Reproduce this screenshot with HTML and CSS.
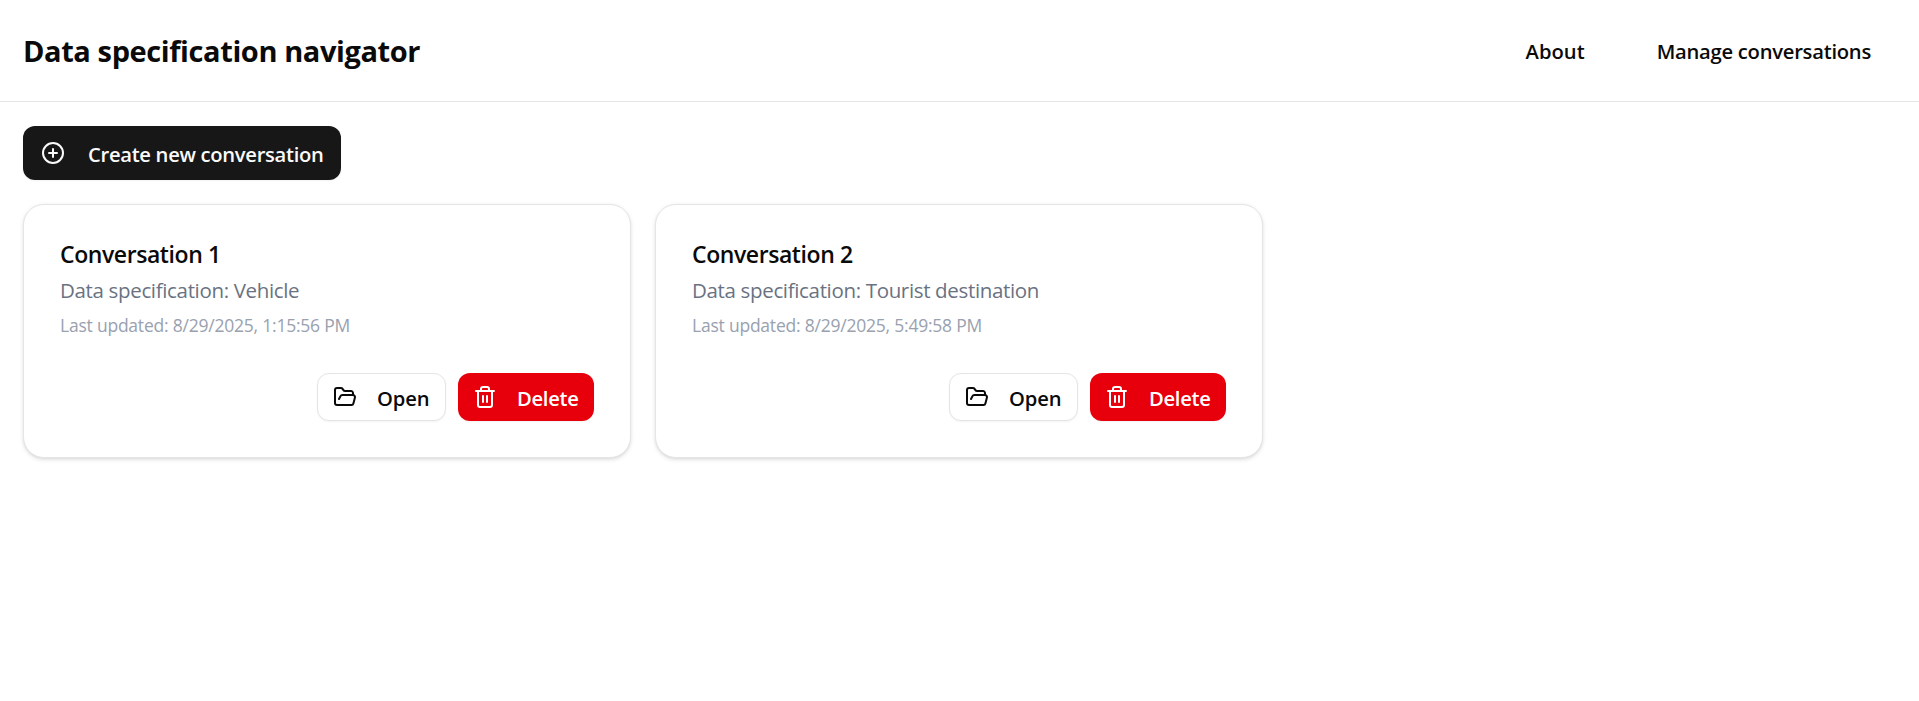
FILE: index.html
```
<!DOCTYPE html>
<html lang="en">
<head>
<meta charset="utf-8">
<title>Data specification navigator</title>
<link rel="stylesheet" href="styles.css">
</head>
<body>
<svg class="sprite" aria-hidden="true">
  <symbol id="circle-plus" viewBox="0 0 24 24"><circle cx="12" cy="12" r="10"/><path d="M8 12h8M12 8v8"/></symbol>
  <symbol id="folder-open" viewBox="0 0 24 24"><path d="m6 14 1.5-2.9A2 2 0 0 1 9.24 10H20a2 2 0 0 1 1.94 2.5l-1.54 6a2 2 0 0 1-1.95 1.5H4a2 2 0 0 1-2-2V5a2 2 0 0 1 2-2h3.9a2 2 0 0 1 1.69.9l.81 1.2a2 2 0 0 0 1.67.9H18a2 2 0 0 1 2 2v2"/></symbol>
  <symbol id="trash" viewBox="0 0 24 24"><path d="M3 6h18M19 6v14c0 1-1 2-2 2H7c-1 0-2-1-2-2V6M8 6V4c0-1 1-2 2-2h4c1 0 2 1 2 2v2M10 11v6M14 11v6"/></symbol>
</svg>
<header class="header">
  <h1 class="brand">Data specification navigator</h1>
  <nav class="nav">
    <a class="nav-link nav-about">About</a>
    <a class="nav-link nav-manage">Manage conversations</a>
  </nav>
</header>
<main class="main">
  <button class="btn btn-primary"><svg class="icon"><use href="#circle-plus"/></svg><span>Create new conversation</span></button>
  <div class="grid">
    <article class="card">
      <h2 class="card-title">Conversation 1</h2>
      <p class="spec">Data specification: Vehicle</p>
      <p class="updated">Last updated: 8/29/2025, 1:15:56 PM</p>
      <div class="actions">
        <button class="btn btn-sm btn-outline"><svg class="icon"><use href="#folder-open"/></svg><span>Open</span></button>
        <button class="btn btn-sm btn-danger"><svg class="icon"><use href="#trash"/></svg><span>Delete</span></button>
      </div>
    </article>
    <article class="card">
      <h2 class="card-title">Conversation 2</h2>
      <p class="spec">Data specification: Tourist destination</p>
      <p class="updated">Last updated: 8/29/2025, 5:49:58 PM</p>
      <div class="actions">
        <button class="btn btn-sm btn-outline"><svg class="icon"><use href="#folder-open"/></svg><span>Open</span></button>
        <button class="btn btn-sm btn-danger"><svg class="icon"><use href="#trash"/></svg><span>Delete</span></button>
      </div>
    </article>
  </div>
</main>
</body>
</html>
```
FILE: styles.css
```
* { box-sizing: border-box; }
body { margin: 0; background: #fff; color: #0a0a0a; font-family: "Open Sans", "Noto Sans", sans-serif; }
h1, h2, p { margin: 0; }
.sprite { display: none; }

.header { display: flex; align-items: center; justify-content: space-between; height: 102px; padding: 0 48px 0 23px; border-bottom: 1px solid #e5e5e5; }
.brand { font-size: 29px; line-height: 45px; font-weight: 700; letter-spacing: -0.4px; white-space: nowrap; }
.nav { display: flex; gap: 72px; }
.nav-link { font-size: 20.2px; line-height: 30px; font-weight: 600; }
.nav-manage { letter-spacing: -0.25px; }

.main { display: flex; flex-direction: column; align-items: flex-start; gap: 24px; padding: 24px 24px 24px 23px; }
.grid { display: grid; grid-template-columns: repeat(3, 1fr); gap: 24px; width: 100%; }

.btn { display: flex; align-items: center; border: 0; border-radius: 12px; color: #fafafa; font-family: inherit; font-size: 20.2px; font-weight: 600; line-height: 30px; white-space: nowrap; box-shadow: 0 1px 2px rgba(0, 0, 0, .05); }
.btn span { padding-top: 2px; }
.icon { width: 24px; height: 24px; flex: none; fill: none; stroke: currentColor; stroke-width: 2; stroke-linecap: round; stroke-linejoin: round; }
.btn-primary { width: 318px; height: 54px; gap: 23px; padding: 0 18px; background: #171717; letter-spacing: -0.3px; }
.btn-sm { height: 48px; gap: 20px; padding: 0 15px; letter-spacing: -0.15px; }
.btn-outline { width: 129px; border: 1px solid #e5e5e5; background: #fff; color: #0a0a0a; }
.btn-danger { width: 136px; background: #e7000b; color: #fff; letter-spacing: -0.3px; }

.card { display: flex; flex-direction: column; height: 254px; padding: 31px 36px 36px; border: 1px solid #e5e5e5; border-radius: 21px; background: #fff; box-shadow: 0 1.5px 4.5px rgba(0, 0, 0, .1), 0 1.5px 3px -1.5px rgba(0, 0, 0, .1); }
.card-title { font-size: 23px; line-height: 36px; font-weight: 600; letter-spacing: -0.42px; }
.spec { margin-top: 2px; color: #6a7282; font-size: 20.5px; line-height: 32px; letter-spacing: -0.34px; }
.updated { margin-top: 4px; color: #99a1af; font-size: 17.5px; line-height: 30px; letter-spacing: -0.22px; }
.actions { display: flex; justify-content: flex-end; gap: 12px; margin-top: auto; }
```
